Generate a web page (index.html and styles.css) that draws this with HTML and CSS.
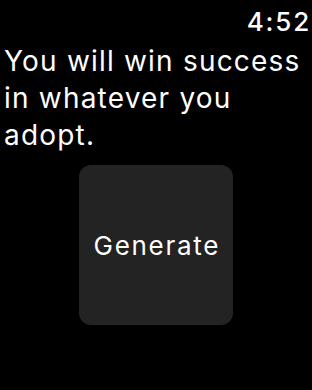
FILE: index.html
```html
<!DOCTYPE html>
<html>
<head>
<meta charset="utf-8">
<link rel="stylesheet" href="styles.css">
</head>
<body>
<div class="screen">
  <div class="status"><span class="time">4:52</span></div>
  <p class="fortune">You will win success in whatever you adopt.</p>
  <div class="actions"><button class="generate">Generate</button></div>
</div>
</body>
</html>
```
FILE: styles.css
```css
html, body {
  margin: 0;
  padding: 0;
  background: #000;
}
.screen {
  width: 312px;
  height: 390px;
  display: flex;
  flex-direction: column;
  font-family: Inter, "Noto Sans", sans-serif;
  color: #fff;
}
.status {
  display: flex;
  justify-content: flex-end;
  padding: 7px 1px 0 0;
  height: 34px;
  box-sizing: border-box;
}
.time {
  font-size: 26px;
  font-weight: 500;
  line-height: 30px;
  letter-spacing: 1.8px;
}
.fortune {
  margin: 0;
  padding: 9px 0 0 4px;
  font-size: 28px;
  line-height: 37px;
  font-weight: 400;
  letter-spacing: 1.2px;
}
.actions {
  display: flex;
  justify-content: center;
  padding-top: 11px;
}
.generate {
  width: 154px;
  height: 160px;
  border: none;
  border-radius: 12px;
  background: #232323;
  color: #fff;
  font-family: Inter, "Noto Sans", sans-serif;
  font-size: 26px;
  letter-spacing: 1.7px;
  padding: 0 0 0 1.7px;
}
```
